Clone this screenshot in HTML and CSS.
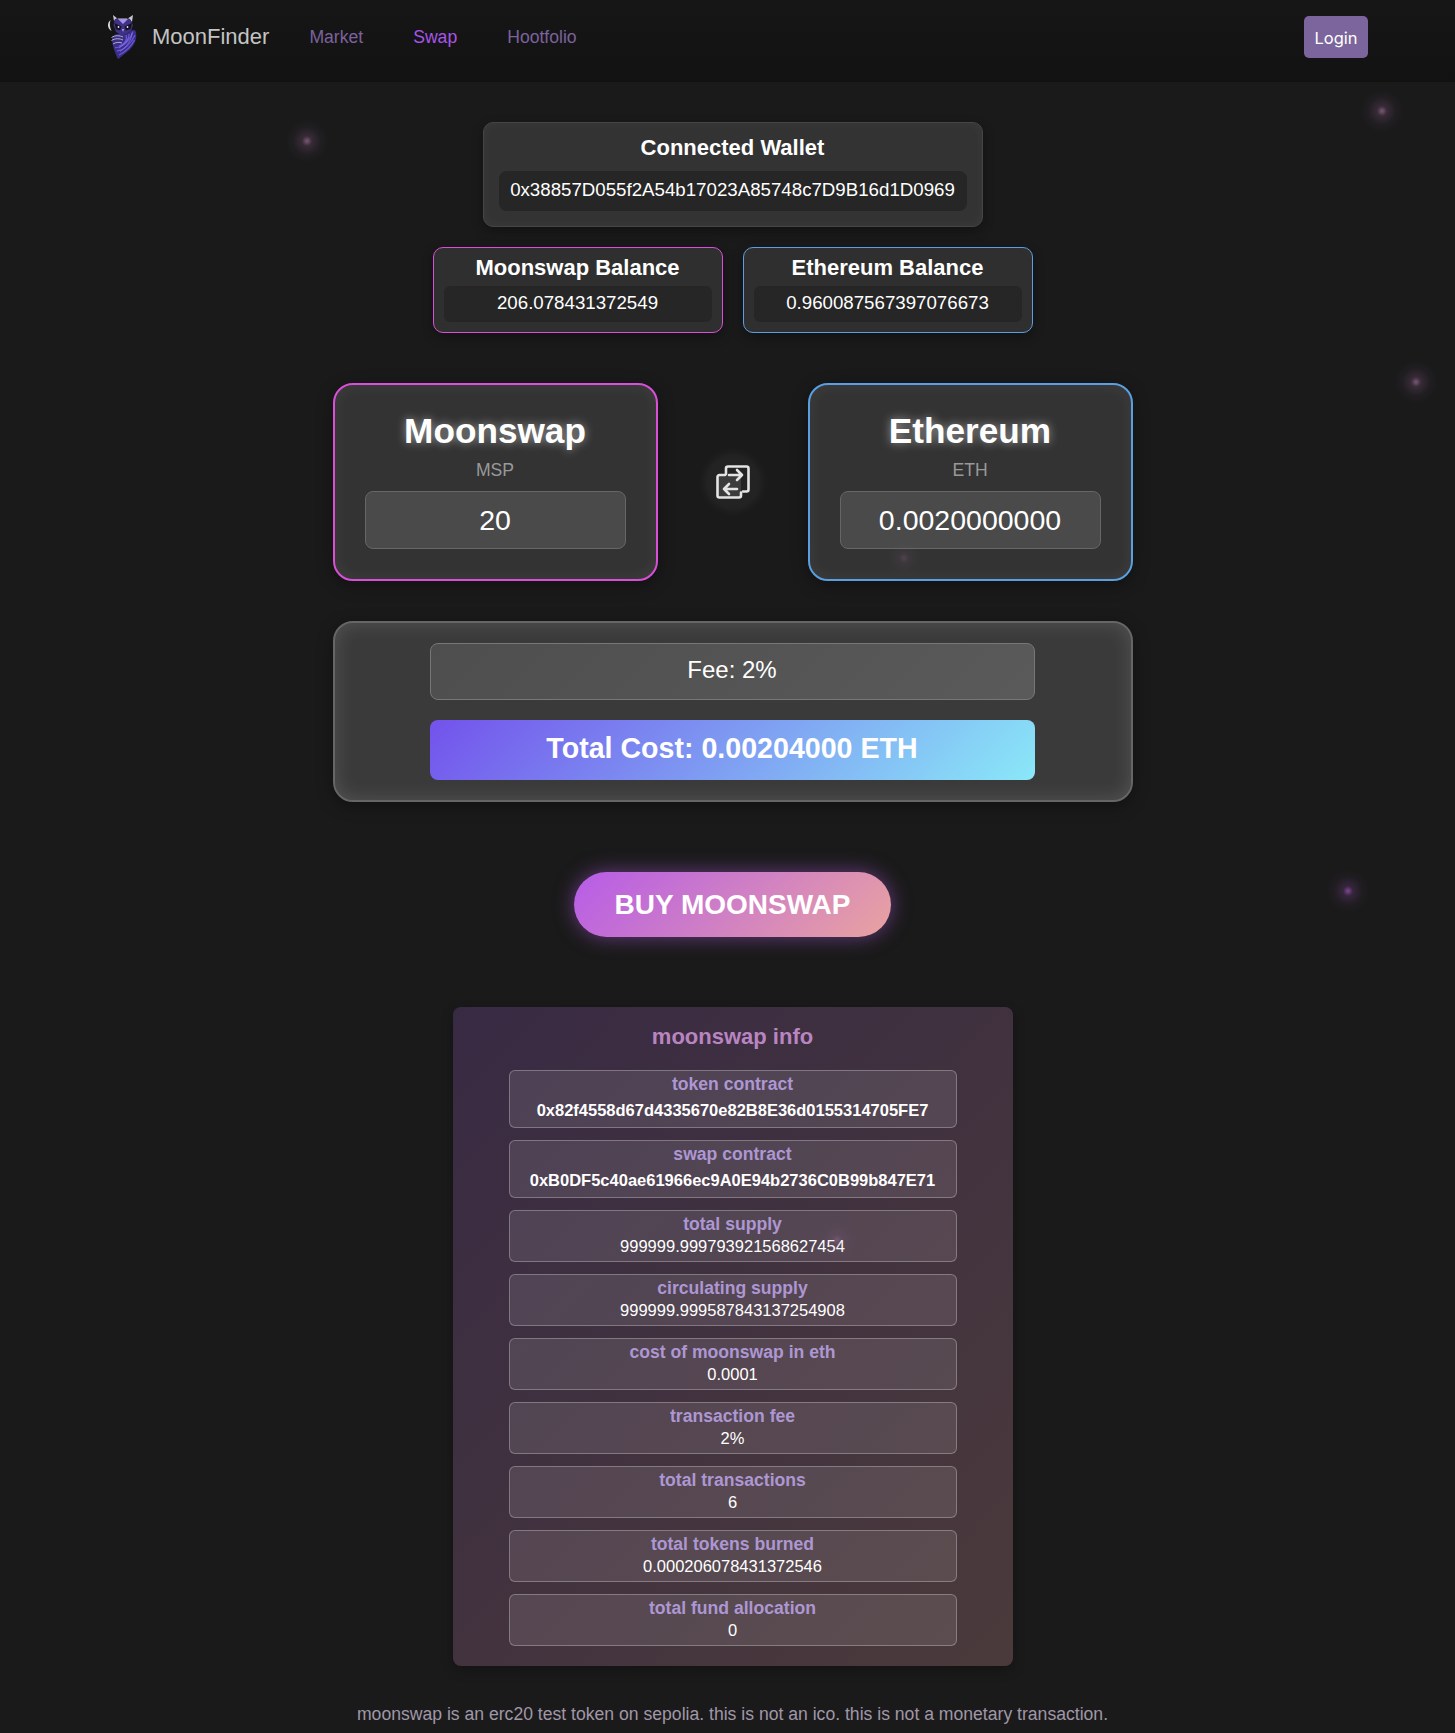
FILE: index.html
```html
<!DOCTYPE html>
<html lang="en">
<head>
    <meta charset="UTF-8">
    <meta name="viewport" content="width=device-width, initial-scale=1.0">
    <title>MoonFinder Swap</title>
    <link rel="stylesheet" href="styles.css">
</head>
<body>
    <div class="sparkle sparkle-a"></div>
    <div class="sparkle sparkle-b"></div>
    <div class="sparkle sparkle-c"></div>
    <div class="sparkle sparkle-d"></div>
    <div class="sparkle sparkle-e"></div>
    <div class="sparkle sparkle-f"></div>

    <header class="topbar">
        <div class="brand">
            <svg class="owl" viewBox="0 0 30 44" width="30" height="44">
                <path d="M3.500 5 C0 8 0 13 4.500 16 C2.500 12 2.500 8 3.500 5Z" fill="#d8d8d8"/>
                <path d="M6 0 L11 4 H20 L26 0 L25 7 L22 3.500 L9 3.500 L7 6Z" fill="#c8c8d0"/>
                <path d="M8 4 H23 L26 10 L24 16 L16 21 L9 17 L6.500 10Z" fill="#3f3185"/>
                <path d="M11 4 H21 L16 9Z" fill="#a793ea"/>
                <path d="M7.500 8 L14.500 11.500 L13 15.500 L9 14Z" fill="#14121f"/>
                <path d="M25 8 L17.500 11.500 L19 15.500 L23.500 14Z" fill="#14121f"/>
                <circle cx="11.500" cy="12" r="0.900" fill="#e8e8f0"/>
                <circle cx="20.500" cy="12" r="0.900" fill="#e8e8f0"/>
                <path d="M15 14 L17 14 L16 17Z" fill="#b9aef0"/>
                <path d="M5 23 C7 18 14 18 18 20 C22 18 27 12 29 17 C30.500 26 26 32 20 37 C16 40 13 43 11 44 C8 38 5 30 5 23Z" fill="#3a2e86"/>
                <path d="M4.500 22.500 C8 20 13 20.500 16 22 M4.500 25.500 C8.500 23 13 23.500 16 25 M6 29 C9 27 12.500 27 15 28" stroke="#bfbfca" stroke-width="0.900" fill="none"/>
                <path d="M8 32.500 C15 33 22 27 26 16.500 M10 36 C17 35 24 29 28 20 M12 40 C18 37 24 32 27.500 25 M19 20 C21 25 18 29 12 31" stroke="#6a55d8" stroke-width="1.300" fill="none"/>
                <path d="M22 19 C22 25 18 29 12 33 M25 18 C24.500 26 19 32 13 36.500" stroke="#8e7cf0" stroke-width="0.700" fill="none"/>
            </svg>
            <span class="brand-name">MoonFinder</span>
        </div>
        <nav class="nav">
            <a class="nav-link">Market</a>
            <a class="nav-link active">Swap</a>
            <a class="nav-link">Hootfolio</a>
        </nav>
        <button class="login-btn">Login</button>
    </header>

    <main class="content">
        <section class="wallet-box">
            <h3>Connected Wallet</h3>
            <div class="wallet-field">0x38857D055f2A54b17023A85748c7D9B16d1D0969</div>
        </section>

        <section class="balances">
            <div class="balance-box msp">
                <h3>Moonswap Balance</h3>
                <div class="balance-field">206.078431372549</div>
            </div>
            <div class="balance-box eth">
                <h3>Ethereum Balance</h3>
                <div class="balance-field">0.960087567397076673</div>
            </div>
        </section>

        <section class="swap-row">
            <div class="token-card msp">
                <h2>Moonswap</h2>
                <p class="symbol">MSP</p>
                <div class="token-input">20</div>
            </div>
            <div class="swap-icon">
                <svg viewBox="0 0 34 34" width="34" height="34">
                    <path d="M1.500 12a2 2 0 0 1 2-2H25V30.500a2 2 0 0 1-2 2H3.500a2 2 0 0 1-2-2Z" fill="#3c3c3c"/>
                    <path d="M10 9V3.500a2 2 0 0 1 2-2H30.500a2 2 0 0 1 2 2V24.500a2 2 0 0 1-2 2H27" fill="none" stroke="#e4e4e4" stroke-width="2.600" stroke-linecap="round"/>
                    <path d="M25 27.500v3a2 2 0 0 1-2 2H3.500a2 2 0 0 1-2-2V12a2 2 0 0 1 2-2H9" fill="none" stroke="#e4e4e4" stroke-width="2.600" stroke-linecap="round"/>
                    <path d="M13 10H26M21 5 26 10 21 15" fill="none" stroke="#e4e4e4" stroke-width="2.600" stroke-linecap="round" stroke-linejoin="round"/>
                    <path d="M21 24H8M13 19 8 24 13 29" fill="none" stroke="#e4e4e4" stroke-width="2.600" stroke-linecap="round" stroke-linejoin="round"/>
                </svg>
            </div>
            <div class="token-card eth">
                <h2>Ethereum</h2>
                <p class="symbol">ETH</p>
                <div class="token-input">0.0020000000</div>
            </div>
        </section>

        <section class="cost-panel">
            <div class="fee-line">Fee: 2%</div>
            <div class="total-line">Total Cost: 0.00204000 ETH</div>
        </section>

        <button class="buy-btn">BUY MOONSWAP</button>

        <section class="info-card">
            <h3>moonswap info</h3>
            <div class="info-row contract">
                <div class="info-label">token contract</div>
                <div class="info-value">0x82f4558d67d4335670e82B8E36d0155314705FE7</div>
            </div>
            <div class="info-row contract">
                <div class="info-label">swap contract</div>
                <div class="info-value">0xB0DF5c40ae61966ec9A0E94b2736C0B99b847E71</div>
            </div>
            <div class="info-row">
                <div class="info-label">total supply</div>
                <div class="info-value">999999.999793921568627454</div>
            </div>
            <div class="info-row">
                <div class="info-label">circulating supply</div>
                <div class="info-value">999999.999587843137254908</div>
            </div>
            <div class="info-row">
                <div class="info-label">cost of moonswap in eth</div>
                <div class="info-value">0.0001</div>
            </div>
            <div class="info-row">
                <div class="info-label">transaction fee</div>
                <div class="info-value">2%</div>
            </div>
            <div class="info-row">
                <div class="info-label">total transactions</div>
                <div class="info-value">6</div>
            </div>
            <div class="info-row">
                <div class="info-label">total tokens burned</div>
                <div class="info-value">0.000206078431372546</div>
            </div>
            <div class="info-row">
                <div class="info-label">total fund allocation</div>
                <div class="info-value">0</div>
            </div>
        </section>

        <p class="disclaimer">moonswap is an erc20 test token on sepolia. this is not an ico. this is not a monetary transaction.</p>
    </main>
</body>
</html>
```

FILE: styles.css
```css
body {
    font-family: "Liberation Sans", Arial, sans-serif;
    background-color: #1a1a1a;
    color: #fff;
    margin: 0;
    padding: 0;
    position: relative;
    overflow-x: hidden;
}

h2, h3, p {
    margin: 0;
}

/* background sparkles */
.sparkle {
    position: absolute;
    width: 44px;
    height: 44px;
    border-radius: 50%;
    pointer-events: none;
    z-index: 5;
    background: radial-gradient(circle, rgba(200, 140, 190, 0.55) 0, rgba(170, 110, 170, 0.2) 16%, rgba(150, 100, 170, 0.05) 45%, transparent 70%);
}
.sparkle-a { left: 285px; top: 119px; }
.sparkle-b { left: 1360px; top: 89px; }
.sparkle-c { left: 1394px; top: 360px; }
.sparkle-d { left: 1326px; top: 869px; background: radial-gradient(circle, rgba(170, 90, 200, 0.7) 0, rgba(150, 80, 180, 0.22) 16%, rgba(150, 80, 180, 0.05) 45%, transparent 70%); }
.sparkle-e { left: 882px; top: 536px; opacity: 0.35; }
.sparkle-f { left: 815px; top: 1218px; opacity: 0.5; }

/* top bar */
.topbar {
    display: flex;
    align-items: center;
    height: 74px;
    padding: 0 87px 8px 107px;
    background: linear-gradient(#161616, #121212);
}
.brand {
    display: flex;
    align-items: center;
    gap: 15px;
}
.brand-name {
    font-size: 22px;
    color: #c4c4c4;
}
.nav {
    display: flex;
    gap: 50px;
    margin-left: 40px;
    flex: 1;
}
.nav-link {
    font-size: 17.6px;
    color: #7b629d;
}
.nav-link.active {
    color: #a855e8;
}
.login-btn {
    width: 64px;
    height: 42px;
    border: none;
    border-radius: 5px;
    background-color: #7b659c;
    color: #fff;
    font-family: Inter, sans-serif;
    font-size: 16.5px;
    padding: 2px 0 0;
}

/* page column */
.content {
    display: flex;
    flex-direction: column;
    align-items: center;
    padding: 40px 0 8px 10px;
}

.wallet-box {
    box-sizing: border-box;
    width: 500px;
    height: 105px;
    padding: 13px 15px 0;
    text-align: center;
    background-color: #333;
    border: 1px solid #454545;
    border-radius: 10px;
    box-shadow: 0 4px 12px rgba(0, 0, 0, 0.3), inset 0 0 12px rgba(255, 255, 255, 0.04);
}
.wallet-box h3 {
    font-size: 22px;
    line-height: 24px;
    margin-bottom: 11px;
}
.wallet-field {
    height: 40px;
    line-height: 38px;
    font-size: 18.7px;
    background-color: #262626;
    border-radius: 8px;
}

.balances {
    display: flex;
    gap: 20px;
    margin-top: 20px;
}
.balance-box {
    box-sizing: border-box;
    width: 290px;
    height: 86px;
    padding: 8px 10px 0;
    text-align: center;
    background-color: #2f2f2f;
    border: 1px solid #555;
    border-radius: 10px;
    box-shadow: 0 4px 12px rgba(0, 0, 0, 0.3);
}
.balance-box.msp { border-color: #d94fd8; }
.balance-box.eth { border-color: #5a9fe0; }
.balance-box h3 {
    font-size: 22px;
    line-height: 24px;
    margin-bottom: 6px;
}
.balance-field {
    height: 36px;
    line-height: 34px;
    font-size: 18.7px;
    background-color: #262626;
    border-radius: 6px;
}

.swap-row {
    display: flex;
    justify-content: space-between;
    align-items: center;
    width: 800px;
    margin-top: 50px;
}
.token-card {
    box-sizing: border-box;
    width: 325px;
    height: 198px;
    padding: 26px 30px 0;
    text-align: center;
    background-color: #333;
    border: 2px solid #555;
    border-radius: 20px;
    box-shadow: 0 4px 16px rgba(0, 0, 0, 0.35), inset 0 0 16px rgba(255, 255, 255, 0.06);
}
.token-card.msp { border-color: #d94fd8; }
.token-card.eth { border-color: #5a9fe0; }
.token-card h2 {
    font-size: 35.2px;
    line-height: 40px;
    text-shadow: 0 0 10px rgba(255, 255, 255, 0.5);
}
.symbol {
    margin-top: 9px;
    font-size: 17.6px;
    line-height: 20px;
    color: #999;
}
.token-input {
    box-sizing: border-box;
    height: 58px;
    margin-top: 11px;
    line-height: 56px;
    font-size: 28.5px;
    background-color: #4a4a4a;
    border: 1px solid #666;
    border-radius: 8px;
}

.swap-icon {
    display: flex;
    align-items: center;
    justify-content: center;
    width: 50px;
    height: 50px;
    border-radius: 50%;
    background-color: #232323;
    box-shadow: 0 0 14px rgba(255, 255, 255, 0.1);
}

.cost-panel {
    box-sizing: border-box;
    width: 800px;
    height: 181px;
    margin-top: 40px;
    padding: 20px 96px 0 95px;
    text-align: center;
    background-color: #3a3a3a;
    border: 2px solid #666;
    border-radius: 20px;
    box-shadow: 0 4px 16px rgba(0, 0, 0, 0.35), inset 0 0 20px rgba(255, 255, 255, 0.14);
}
.fee-line {
    box-sizing: border-box;
    height: 57px;
    line-height: 51px;
    font-size: 24px;
    background: linear-gradient(135deg, #4e4e4e, #5a5a5a);
    border: 1px solid #777;
    border-radius: 8px;
}
.total-line {
    height: 60px;
    line-height: 56px;
    margin-top: 20px;
    font-size: 28.6px;
    font-weight: bold;
    background: linear-gradient(135deg, #7352ec, #8ae8f8);
    border-radius: 8px;
}

.buy-btn {
    width: 317px;
    height: 65px;
    margin-top: 70px;
    border: none;
    border-radius: 33px;
    padding: 0;
    color: #fff;
    font-family: "Liberation Sans", Arial, sans-serif;
    font-size: 28px;
    font-weight: bold;
    background: linear-gradient(135deg, #b65ce8, #e9a3a0);
    box-shadow: 0 0 20px rgba(182, 92, 232, 0.5);
}

.info-card {
    box-sizing: border-box;
    width: 560px;
    height: 659px;
    margin-top: 70px;
    padding: 16px 56px 0;
    text-align: center;
    background: linear-gradient(135deg, #382a43, #4b3a3b);
    border-radius: 8px;
    box-shadow: 0 4px 12px rgba(0, 0, 0, 0.25);
}
.info-card h3 {
    font-size: 22px;
    line-height: 28px;
    margin-bottom: 19px;
    color: #b985c0;
}
.info-row {
    box-sizing: border-box;
    height: 52px;
    margin-bottom: 12px;
    padding-top: 2px;
    background-color: rgba(255, 255, 255, 0.1);
    border: 1px solid rgba(255, 255, 255, 0.28);
    border-radius: 6px;
}
.info-row.contract {
    height: 58px;
}
.info-label {
    font-size: 17.6px;
    line-height: 22px;
    font-weight: bold;
    color: #ad97d2;
}
.info-value {
    font-size: 16.5px;
    line-height: 22px;
}
.contract .info-value {
    margin-top: 4px;
    font-weight: bold;
}

.disclaimer {
    margin-top: 38px;
    font-size: 17.6px;
    line-height: 20px;
    color: #a097a8;
}
```
